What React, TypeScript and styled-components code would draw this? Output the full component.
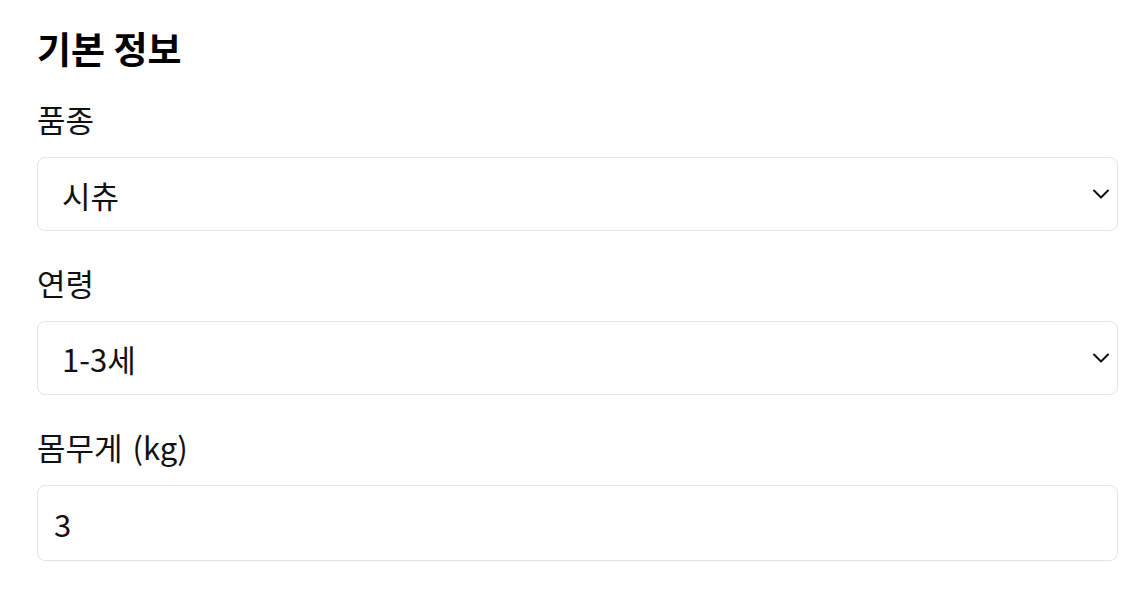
import React from "react";
import styled, { createGlobalStyle } from "styled-components";

const GlobalStyle = createGlobalStyle`
  html, body {
    margin: 0;
    padding: 0;
    background: #ffffff;
  }
  body {
    font-family: "Noto Sans CJK KR", "Noto Sans", sans-serif;
    color: #111111;
  }
`;

const Page = styled.div`
  padding: 26px 28px 0 37px;
  display: flex;
  flex-direction: column;
`;

const Title = styled.h2`
  margin: 0 0 29px;
  font-size: 37px;
  line-height: 44px;
  font-weight: 700;
  color: #000;
`;

const Fields = styled.div`
  display: flex;
  flex-direction: column;
  gap: 32px;
`;

const Field = styled.div`
  display: flex;
  flex-direction: column;
`;

const Label = styled.label`
  font-size: 31px;
  line-height: 40px;
  margin-bottom: 18px;
  color: #111;
  word-spacing: 3px;
`;

const SelectWrap = styled.div`
  position: relative;
`;

const Select = styled.select`
  appearance: none;
  -webkit-appearance: none;
  width: 100%;
  height: 74px;
  box-sizing: border-box;
  border: 1px solid #e4e4e4;
  border-radius: 8px;
  background: #fff;
  padding: 0 40px 0 24px;
  font-family: inherit;
  font-size: 31px;
  color: #111;
  outline: none;
`;

const Chevron = styled.svg`
  position: absolute;
  right: 8px;
  top: 50%;
  transform: translateY(-50%);
  width: 18px;
  height: 18px;
  pointer-events: none;
`;

const Input = styled.input`
  width: 100%;
  height: 76px;
  box-sizing: border-box;
  border: 1px solid #e4e4e4;
  border-radius: 8px;
  background: #fff;
  padding: 0 16px;
  font-family: inherit;
  font-size: 31px;
  color: #111;
  outline: none;
`;

const Arrow = () => (
  <Chevron viewBox="0 0 18 18" fill="none">
    <path d="M2 5.5 L9 12.5 L16 5.5" stroke="#111" strokeWidth="2" strokeLinecap="round" strokeLinejoin="round" />
  </Chevron>
);

export default function App() {
  return (
    <>
      <GlobalStyle />
      <Page>
        <Title>기본 정보</Title>
        <Fields>
          <Field>
            <Label>품종</Label>
            <SelectWrap>
              <Select defaultValue="시츄">
                <option>말티즈</option>
                <option>시츄</option>
                <option>푸들</option>
              </Select>
              <Arrow />
            </SelectWrap>
          </Field>
          <Field>
            <Label>연령</Label>
            <SelectWrap>
              <Select defaultValue="1-3세">
                <option>1세 미만</option>
                <option>1-3세</option>
                <option>4-7세</option>
              </Select>
              <Arrow />
            </SelectWrap>
          </Field>
          <Field>
            <Label>몸무게 (kg)</Label>
            <Input type="number" defaultValue="3" />
          </Field>
        </Fields>
      </Page>
    </>
  );
}
